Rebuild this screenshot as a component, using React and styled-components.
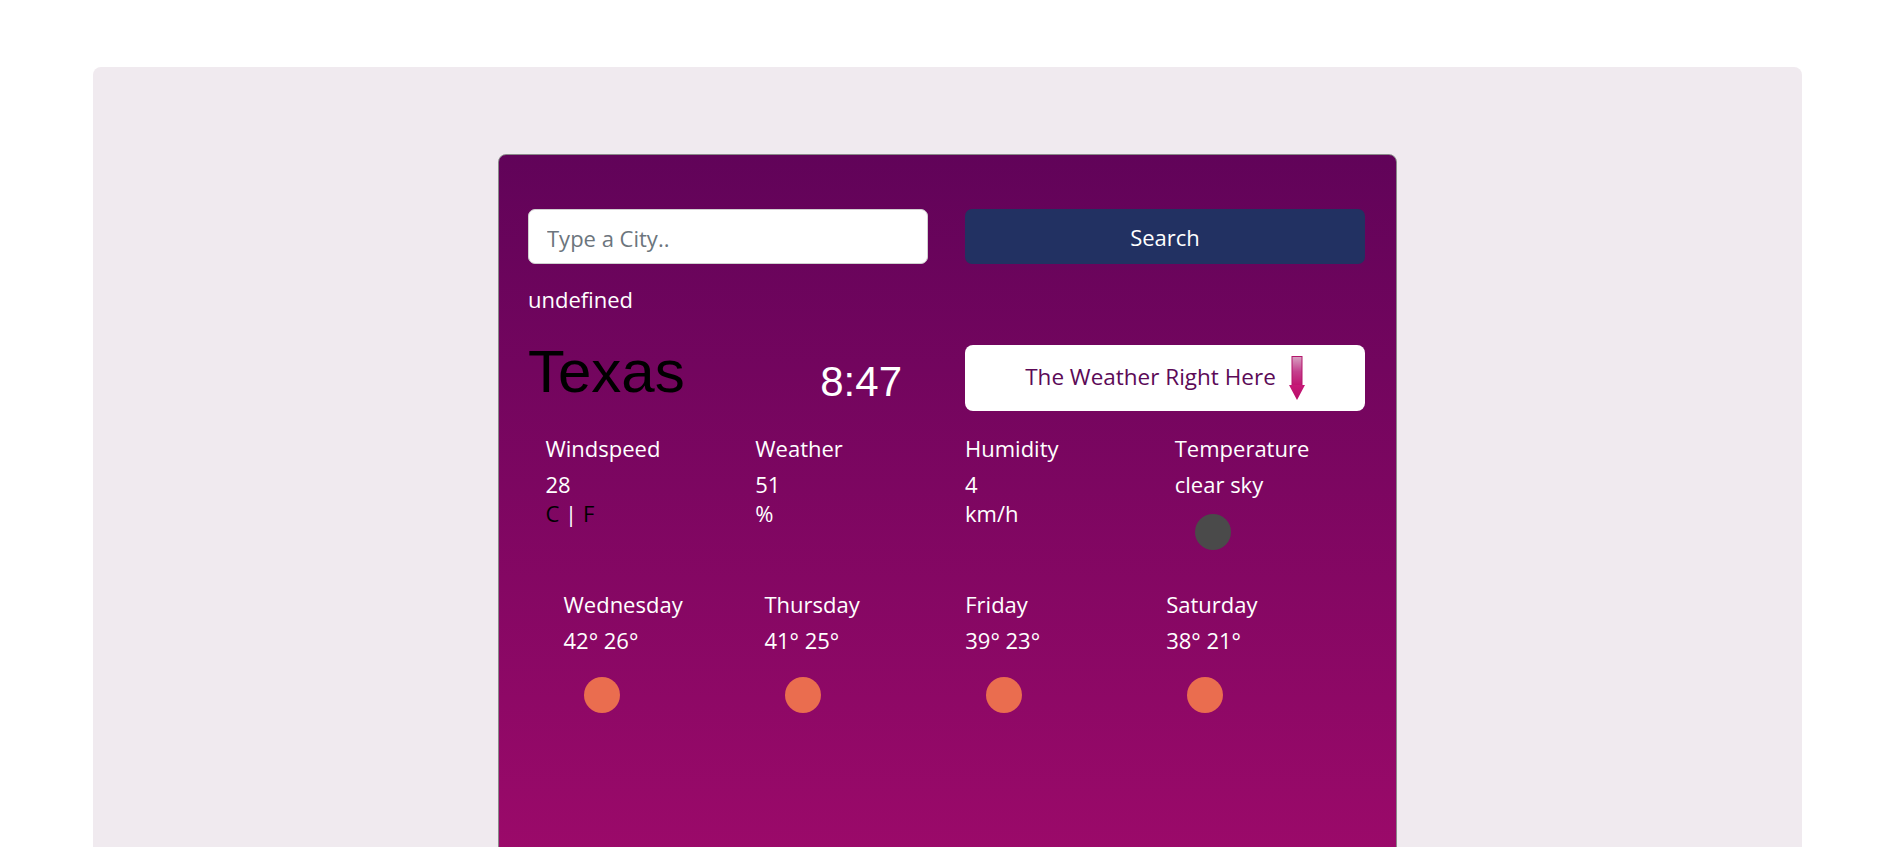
import React from "react";
import styled, { createGlobalStyle } from "styled-components";

const GlobalStyle = createGlobalStyle`
  html, body { margin: 0; padding: 0; background: #ffffff; }
  body { font-family: "Open Sans", "Noto Sans", sans-serif; overflow: hidden; }
  * { box-sizing: border-box; }
`;

const Page = styled.div`
  padding-top: 67px;
  padding-left: 93px;
`;

const Shell = styled.div`
  width: 1709px;
  background: #f0eaef;
  border-radius: 8px;
  padding-top: 87px;
  padding-bottom: 40px;
`;

const Card = styled.div`
  width: 899px;
  min-height: 760px;
  margin: 0 auto;
  border: 1px solid #8a8a8a;
  border-radius: 8px;
  background: linear-gradient(180deg, #610359 0%, #a00a6b 100%);
  padding: 54px 29px 40px;
  color: #ffffff;
`;

const TwoCols = styled.div`
  display: grid;
  grid-template-columns: 400px 400px;
  column-gap: 37px;
  margin-top: ${(p) => p.$top || 0}px;
`;

const CityInput = styled.input`
  height: 55px;
  width: 100%;
  border: 1px solid #cfcfcf;
  border-radius: 7px;
  background: #ffffff;
  padding: 2px 18px 0;
  font-family: "Open Sans", sans-serif;
  font-size: 22px;
  color: #333;
  outline: none;
  &::placeholder { color: #6c757d; }
`;

const SearchButton = styled.button`
  height: 55px;
  width: 100%;
  border: none;
  border-radius: 7px;
  background: #223162;
  color: #ffffff;
  font-family: "Open Sans", sans-serif;
  font-size: 22px;
  padding-top: 2px;
  cursor: pointer;
`;

const Status = styled.div`
  margin-top: 19px;
  font-size: 22px;
  line-height: 33px;
`;

const Heading = styled.div`
  display: flex;
  justify-content: space-between;
  align-items: flex-start;
  padding-right: 26px;
`;

const City = styled.h1`
  margin: 0;
  font-family: "Liberation Sans", Arial, sans-serif;
  font-weight: 400;
  font-size: 60px;
  line-height: 54px;
  color: #000000;
`;

const Clock = styled.div`
  margin-top: 16px;
  font-family: "Liberation Sans", Arial, sans-serif;
  font-size: 42px;
  line-height: 42px;
  color: #ffffff;
`;

const Banner = styled.div`
  height: 66px;
  background: #ffffff;
  border-radius: 8px;
  display: flex;
  align-items: center;
  justify-content: center;
  gap: 13px;
  color: #5c0a57;
  font-size: 22.5px;
`;

const BannerText = styled.span`
  margin-top: -3px;
`;

const StatsGrid = styled.div`
  display: grid;
  grid-template-columns: repeat(4, 1fr);
  margin-top: 21px;
`;

const Stat = styled.div`
  padding-left: 17.5px;
`;

const Label = styled.div`
  font-size: 22px;
  line-height: 33px;
  margin-bottom: 5px;
`;

const Line = styled.div`
  font-size: 22px;
  line-height: 29px;
  color: ${(p) => p.$color || "#ffffff"};
`;

const Sep = styled.span`
  color: #ffffff;
`;

const Dot = styled.div`
  width: 36px;
  height: 36px;
  border-radius: 50%;
  background: ${(p) => p.$color};
  margin-top: ${(p) => p.$top}px;
  margin-left: ${(p) => p.$left}px;
`;

const Forecast = styled.div`
  display: grid;
  grid-template-columns: repeat(4, 1fr);
  padding-left: 35.5px;
  margin-top: 38px;
`;

const Day = styled.div`
  display: flex;
  flex-direction: column;
`;

const DayName = styled.div`
  font-size: 22px;
  line-height: 33px;
`;

const DayTemps = styled.div`
  font-size: 22px;
  line-height: 33px;
  margin-top: 3.5px;
`;

const DownArrow = () => (
  <svg width="16" height="44" viewBox="0 0 16 44" aria-hidden="true">
    <defs>
      <linearGradient id="shaft" x1="0" y1="0" x2="0" y2="1">
        <stop offset="0" stopColor="#d7a2c2" />
        <stop offset="0.5" stopColor="#c4418e" />
        <stop offset="1" stopColor="#c0106e" />
      </linearGradient>
      <linearGradient id="head" x1="0" y1="0" x2="0" y2="1">
        <stop offset="0" stopColor="#c71a78" />
        <stop offset="1" stopColor="#b80c68" />
      </linearGradient>
    </defs>
    <rect x="3" y="0.5" width="10" height="30" fill="url(#shaft)" stroke="#b3156b" strokeWidth="1" />
    <polygon points="0,29 16,29 8,44" fill="url(#head)" />
  </svg>
);

const stats = [
  { label: "Windspeed", value: "28", unit: "cf" },
  { label: "Weather", value: "51", unit: "%" },
  { label: "Humidity", value: "4", unit: "km/h" },
  { label: "Temperature", value: "clear sky", icon: true },
];

const days = [
  { name: "Wednesday", temps: "42° 26°" },
  { name: "Thursday", temps: "41° 25°" },
  { name: "Friday", temps: "39° 23°" },
  { name: "Saturday", temps: "38° 21°" },
];

export default function App() {
  return (
    <>
      <GlobalStyle />
      <Page>
        <Shell>
          <Card>
            <TwoCols>
              <CityInput placeholder="Type a City.." />
              <SearchButton>Search</SearchButton>
            </TwoCols>
            <Status>undefined</Status>
            <TwoCols $top={29}>
              <Heading>
                <City>Texas</City>
                <Clock>8:47</Clock>
              </Heading>
              <Banner>
                <BannerText>The Weather Right Here</BannerText>
                <DownArrow />
              </Banner>
            </TwoCols>
            <StatsGrid>
              {stats.map((s) => (
                <Stat key={s.label}>
                  <Label>{s.label}</Label>
                  <Line>{s.value}</Line>
                  {s.unit === "cf" && (
                    <Line $color="#000000">
                      C <Sep>|</Sep> F
                    </Line>
                  )}
                  {s.unit && s.unit !== "cf" && <Line>{s.unit}</Line>}
                  {s.icon && <Dot $color="#4a4a4a" $top={14.5} $left={20} />}
                </Stat>
              ))}
            </StatsGrid>
            <Forecast>
              {days.map((d) => (
                <Day key={d.name}>
                  <DayName>{d.name}</DayName>
                  <DayTemps>{d.temps}</DayTemps>
                  <Dot $color="#ea6d4f" $top={20} $left={20.4} />
                </Day>
              ))}
            </Forecast>
          </Card>
        </Shell>
      </Page>
    </>
  );
}
